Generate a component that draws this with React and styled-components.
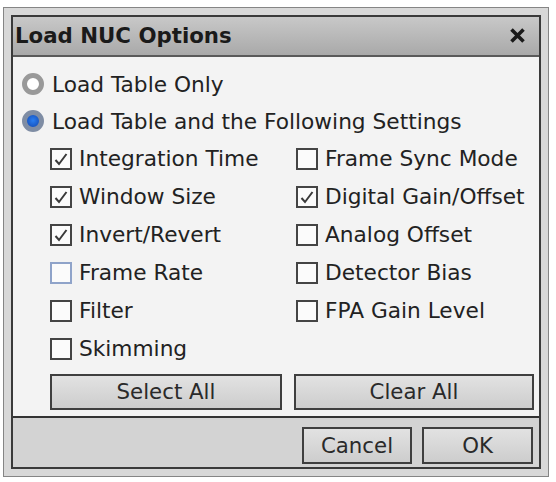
import React, { useState } from "react";
import styled, { createGlobalStyle } from "styled-components";

const GlobalStyle = createGlobalStyle`
  body {
    margin: 0;
    background: #ffffff;
    font-family: "DejaVu Sans", "Liberation Sans", sans-serif;
    color: #222222;
  }
`;

const Frame = styled.div`
  box-sizing: border-box;
  width: 546px;
  height: 470px;
  margin: 7px 0 0 3px;
  padding: 7px;
  border: 1px solid #858585;
  background: #d8d8d8;
`;

const Inner = styled.div`
  box-sizing: border-box;
  height: 100%;
  border: 2px solid #3a3a3a;
  display: flex;
  flex-direction: column;
`;

const TitleBar = styled.div`
  box-sizing: border-box;
  height: 40px;
  display: flex;
  align-items: center;
  justify-content: space-between;
  padding: 0 12px 0 2px;
  background: linear-gradient(#c8c8c8, #a9a9a9);
  border-bottom: 2px solid #5a5a5a;
`;

const Title = styled.span`
  font-size: 21.3px;
  font-weight: bold;
  color: #1a1a1a;
`;

const Close = styled.button`
  border: 0;
  background: none;
  padding: 0;
  width: 20px;
  height: 20px;
  display: flex;
  align-items: center;
  justify-content: center;
`;

const Body = styled.div`
  flex: 1;
  background: #f3f3f3;
  padding: 9px 7px 6px 9px;
`;

const RadioRow = styled.label`
  height: 37px;
  display: flex;
  align-items: center;
  gap: 8px;
  font-size: 21.7px;
`;

const RadioDot = styled.span`
  box-sizing: border-box;
  flex: none;
  width: 22px;
  height: 22px;
  border-radius: 50%;
  border: 5px solid ${(p) => (p.$on ? "#7f8da4" : "#999999")};
  background: ${(p) =>
    p.$on ? "radial-gradient(circle at 50% 45%, #2a7ef0, #1958c4 70%)" : "#ffffff"};
`;

const Grid = styled.div`
  display: grid;
  grid-template-columns: 246px 1fr;
  grid-auto-rows: 38px;
  margin-left: 28px;
`;

const CheckRow = styled.label`
  display: flex;
  align-items: center;
  gap: 7px;
  font-size: 21.7px;
  white-space: nowrap;
`;

const Box = styled.span`
  box-sizing: border-box;
  flex: none;
  width: 22px;
  height: 22px;
  border: 2px solid ${(p) => (p.$focus ? "#8fa3c9" : "#444444")};
  background: #fbfbfb;
  display: flex;
  align-items: center;
  justify-content: center;
`;

const ButtonRow = styled.div`
  display: grid;
  grid-template-columns: 232px 240px;
  gap: 12px;
  margin: 6px 0 0 28px;
`;

const Button = styled.button`
  box-sizing: border-box;
  height: ${(p) => p.$h || 36}px;
  width: ${(p) => (p.$w ? `${p.$w}px` : "auto")};
  border: 2px solid #3f3f3f;
  background: linear-gradient(#e2e2e2, #cdcdcd);
  font-family: inherit;
  font-size: 21.3px;
  color: #2a2a2a;
  padding: 0;
`;

const Footer = styled.div`
  box-sizing: border-box;
  height: 52px;
  border-top: 2px solid #333333;
  background: #d3d3d3;
  display: flex;
  justify-content: flex-end;
  align-items: flex-start;
  gap: 10px;
  padding: 9px 6px 0 0;
`;

const Check = () => (
  <svg width="16" height="16" viewBox="0 0 16 16">
    <path d="M2.5 9 L6 13 L13.5 3" fill="none" stroke="#3a3a3a" strokeWidth="2" />
  </svg>
);

const left = [
  ["Integration Time", true],
  ["Window Size", true],
  ["Invert/Revert", true],
  ["Frame Rate", false, true],
  ["Filter", false],
  ["Skimming", false],
];

const right = [
  ["Frame Sync Mode", false],
  ["Digital Gain/Offset", true],
  ["Analog Offset", false],
  ["Detector Bias", false],
  ["FPA Gain Level", false],
];

export default function App() {
  const [mode, setMode] = useState("settings");
  const rows = [];
  for (let i = 0; i < left.length; i++) {
    rows.push(left[i], right[i] || null);
  }

  return (
    <>
      <GlobalStyle />
      <Frame>
        <Inner>
          <TitleBar>
            <Title>Load NUC Options</Title>
            <Close aria-label="Close">
              <svg width="17" height="17" viewBox="0 0 17 17">
                <path d="M2.5 2.5 L14.5 14.5 M14.5 2.5 L2.5 14.5" stroke="#1a1a1a" strokeWidth="3.6" />
              </svg>
            </Close>
          </TitleBar>
          <Body>
            <RadioRow onClick={() => setMode("table")}>
              <RadioDot $on={mode === "table"} />
              Load Table Only
            </RadioRow>
            <RadioRow onClick={() => setMode("settings")}>
              <RadioDot $on={mode === "settings"} />
              Load Table and the Following Settings
            </RadioRow>
            <Grid>
              {rows.map((r, i) =>
                r ? (
                  <CheckRow key={i}>
                    <Box $focus={r[2]}>{r[1] && <Check />}</Box>
                    {r[0]}
                  </CheckRow>
                ) : (
                  <span key={i} />
                )
              )}
            </Grid>
            <ButtonRow>
              <Button>Select All</Button>
              <Button>Clear All</Button>
            </ButtonRow>
          </Body>
          <Footer>
            <Button $w={110} $h={37}>Cancel</Button>
            <Button $w={111} $h={37}>OK</Button>
          </Footer>
        </Inner>
      </Frame>
    </>
  );
}
